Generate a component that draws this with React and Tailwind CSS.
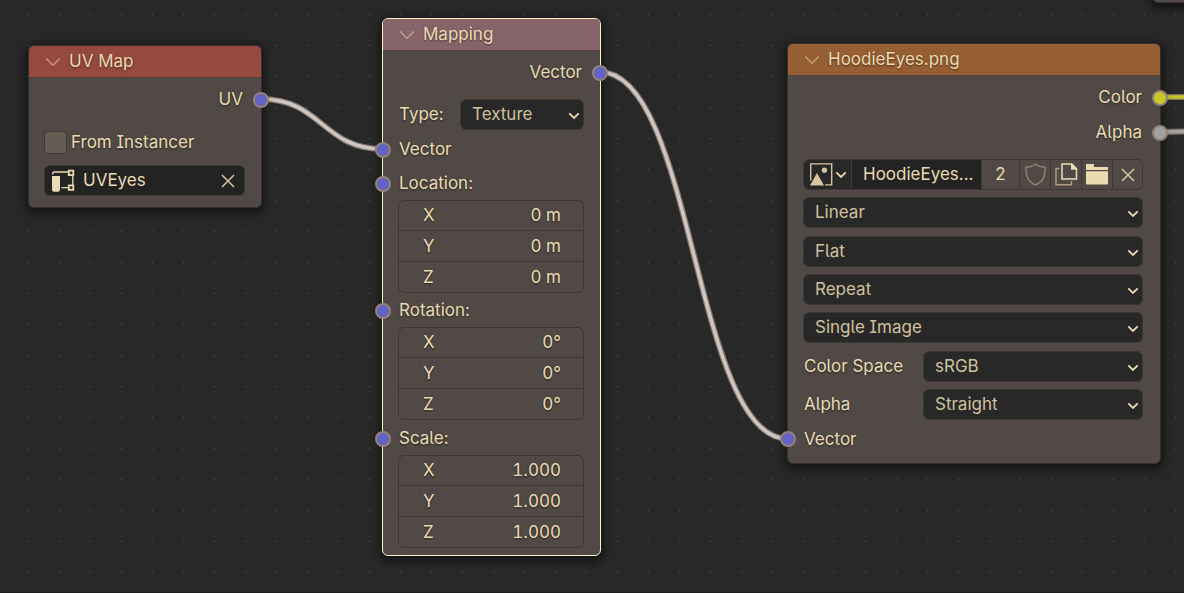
import React from "react";

const SOCKET_COLORS = {
  vector: "bg-[#6363c7]",
  color: "bg-[#c7c729]",
  value: "bg-[#a1a1a1]",
};

function Socket({ side, kind }) {
  return (
    <span
      className={`absolute top-1/2 size-4 -translate-y-1/2 rounded-full border-2 border-[#928374] ${
        side === "in" ? "-left-2" : "-right-2"
      } ${SOCKET_COLORS[kind]}`}
    />
  );
}

function Node({ title, header, active, place, children }) {
  return (
    <section
      className={`absolute rounded-md border bg-[#504945] pb-[7px] shadow-[0_3px_10px_2px_rgba(0,0,0,0.55)] ${
        active ? "border-[#fbf1c7]" : "border-[#35312f]"
      } ${place}`}
    >
      <header
        className={`flex h-8 items-center gap-2 rounded-t-[5px] border-b border-[#3c3836]/70 pl-4 ${header}`}
      >
        <button type="button" aria-label={`Collapse ${title}`}>
          <svg width="16" height="10" viewBox="0 0 16 10" fill="none" stroke="#ebdbb2" strokeOpacity="0.55" strokeWidth="1.5">
            <path d="M1.3 1.5 8 8.2l6.7-6.7" />
          </svg>
        </button>
        <h2>{title}</h2>
      </header>
      {children}
    </section>
  );
}

function Output({ label, kind }) {
  return (
    <div className="relative flex h-[35px] items-center justify-end pr-[18px]">
      {label}
      <Socket side="out" kind={kind} />
    </div>
  );
}

function Input({ label, className }) {
  return (
    <div className={`relative flex items-center pl-4 ${className}`}>
      {label}
      <Socket side="in" kind="vector" />
    </div>
  );
}

function SmallChevron() {
  return (
    <svg width="12" height="8" viewBox="0 0 12 8" fill="none" stroke="#ebdbb2" strokeWidth="1.8">
      <path d="M1.3 1.3 6 6l4.7-4.7" />
    </svg>
  );
}

function Cross() {
  return (
    <svg width="14" height="14" viewBox="0 0 14 14" fill="none" stroke="#d5c6a0" strokeWidth="1.5">
      <path d="M1 1l12 12M13 1 1 13" />
    </svg>
  );
}

function Dropdown({ id, label, value, className }) {
  return (
    <div className={`grid items-center ${className}`}>
      <select
        id={id}
        aria-label={label}
        defaultValue={value}
        className="col-start-1 row-start-1 h-[31px] w-full appearance-none rounded-md border border-[#3c3836] bg-[#282828] pl-[11px] pr-6 text-[#d0c19c]"
      >
        <option>{value}</option>
      </select>
      <span className="pointer-events-none col-start-1 row-start-1 mr-1 mt-0.5 justify-self-end">
        <SmallChevron />
      </span>
    </div>
  );
}

function VectorFields({ name, value }) {
  return (
    <div className="ml-[15px] mr-4 divide-y divide-[#3c3836] rounded-md border border-[#3c3836]">
      {["X", "Y", "Z"].map((axis, i) => (
        <label
          key={axis}
          className={`flex items-center pl-6 pr-[22px] ${i === 1 ? "h-[31px]" : "h-[30px]"}`}
        >
          {axis}
          <input
            aria-label={`${name} ${axis}`}
            defaultValue={value}
            className="w-0 grow bg-transparent text-right tabular-nums [text-shadow:inherit]"
          />
        </label>
      ))}
    </div>
  );
}

function UVIcon() {
  return (
    <svg width="23" height="23" viewBox="0 0 23 23" fill="none" stroke="#ebdbb2" strokeWidth="1.3">
      <path d="M.7 5.5V4.5Q.7 3 2.4 3H16M9.5 18.7H16M20.8 7v9" />
      <path d="M0 7h8v13.5Q8 22.7 6 22.7H2Q0 22.7 0 20.5z" fill="#ebdbb2" stroke="none" />
      <path d="M16.8 1.7h4.5v4.5h-4.5zM16.8 16.4h4.5v4.5h-4.5z" fill="#282828" strokeWidth="1.8" />
    </svg>
  );
}

function ImageIcon() {
  return (
    <svg width="23" height="23" viewBox="0 0 23 23" fill="none" stroke="#d5c6a0" strokeWidth="1.4">
      <path d="M.7 17.5V.9h21v21h-6.5" />
      <path d="M0 22.6 7 10l7 12.6z" fill="#d5c6a0" stroke="none" />
      <circle cx="14.4" cy="7.2" r="2.6" fill="#d5c6a0" stroke="none" />
    </svg>
  );
}

function ShieldIcon() {
  return (
    <svg width="21" height="23" viewBox="0 0 21 23" fill="none" stroke="#8f8672" strokeWidth="1.4">
      <path d="M10.5 1Q7 4.2 1 4.2C.6 13 2.6 18.5 10.5 22 18.4 18.5 20.4 13 20 4.2 14 4.2 10.5 1 10.5 1z" />
    </svg>
  );
}

function CopyIcon() {
  return (
    <svg width="23" height="23" viewBox="0 0 23 23" fill="none">
      <path d="M4.5 5.5H1v16.3h15.5V18" stroke="#ebdbb2" strokeOpacity="0.6" strokeWidth="1.4" />
      <path d="M7 1h9.5l5 5v10H7z" stroke="#ebdbb2" strokeWidth="1.5" />
      <path d="M16 .3h1L22.3 5.5V6.7H16z" fill="#ebdbb2" />
    </svg>
  );
}

function FolderIcon() {
  return (
    <svg width="22" height="21" viewBox="0 0 22 21" fill="#ebdbb2">
      <path d="M0 0h8v3h14v3H0zM0 7.3h22V19.5q0 1-1 1H1q-1 0-1-1z" />
    </svg>
  );
}

const WIRES = [
  { d: "M261 99C322 99 322 149 383 149", color: "#cfc6c2" },
  { d: "M600 72C694 72 694 439 788 439", color: "#cfc6c2" },
  { d: "M1160 97H1400", color: "#c7c729" },
  { d: "M1160 132L1400 128", color: "#a1a1a1" },
];

function Wires() {
  return (
    <svg className="pointer-events-none absolute inset-0 h-full w-full" fill="none">
      {WIRES.map((w) => (
        <g key={w.d}>
          <path d={w.d} stroke="#80746b" strokeWidth="6" />
          <path d={w.d} stroke={w.color} strokeWidth="3.5" />
        </g>
      ))}
    </svg>
  );
}

export default function App() {
  return (
    <main className="relative min-h-screen w-full overflow-hidden border-b border-[#1d1d1d] bg-[#282828] bg-[radial-gradient(circle,#343434_1px,transparent_1.5px)] bg-[length:31px_31px] bg-position-[13px_-1px] font-[Inter,sans-serif] text-[17px] leading-[23px] text-[#ebdbb2] [font-feature-settings:'cv08','ss04'] [text-shadow:0_1px_2px_rgba(0,0,0,0.5)]">
      <Wires />

      <Node title="UV Map" header="bg-[#95493f]" place="left-[28px] top-[45px] w-[234px]">
        <div className="mt-1">
          <Output label="UV" kind="vector" />
        </div>
        <label className="ml-[15px] mt-2.5 flex h-[31px] items-center gap-1">
          <input
            type="checkbox"
            className="size-[23px] appearance-none rounded-[4px] border border-[#3c3836] bg-[#665c54]"
          />
          From Instancer
        </label>
        <div className="mb-1 ml-[15px] mr-4 mt-[7px] flex h-[31px] items-center gap-2 rounded-md border border-[#3c3836] bg-[#232323] pl-[7px] pr-[9px]">
          <UVIcon />
          <input aria-label="UV map name" defaultValue="UVEyes" className="w-0 grow bg-transparent" />
          <button type="button" aria-label="Clear UV map">
            <Cross />
          </button>
        </div>
      </Node>

      <Node title="Mapping" active header="bg-[#87646a]" place="left-[382px] top-[18px] w-[219px]">
        <div className="mt-1">
          <Output label="Vector" kind="vector" />
        </div>
        <div className="mb-0.5 mr-4 mt-[9px] flex items-center justify-between pl-4">
          <label htmlFor="mapping-type">Type:</label>
          <Dropdown id="mapping-type" value="Texture" className="w-[124px]" />
        </div>
        <Input label="Vector" className="h-[35px]" />
        <Input label="Location:" className="h-[33px]" />
        <VectorFields name="Location" value="0 m" />
        <Input label="Rotation:" className="mt-px h-[33px]" />
        <VectorFields name="Rotation" value="0°" />
        <Input label="Scale:" className="mt-0.5 h-[33px]" />
        <VectorFields name="Scale" value="1.000" />
      </Node>

      <Node title="HoodieEyes.png" header="bg-[#965e33]" place="left-[787px] top-[43px] w-[374px]">
        <div className="mt-1">
          <Output label="Color" kind="color" />
          <Output label="Alpha" kind="value" />
        </div>
        <div className="mb-0.5 ml-[15px] mr-[17px] mt-[9px] flex flex-col gap-2">
          <div className="flex flex-col gap-[7px]">
            <div className="flex h-[31px] divide-x divide-[#3c3836] overflow-hidden rounded-md border border-[#3c3836]">
              <button type="button" aria-label="Browse images" className="flex w-12 items-center gap-0.5 bg-[#282828] pl-1.5">
                <ImageIcon />
                <SmallChevron />
              </button>
              <input aria-label="Image name" defaultValue="HoodieEyes..." className="w-0 grow bg-[#232323] pl-[11px]" />
              <button type="button" className="w-[38px]">2</button>
              <button type="button" aria-label="Fake user" className="grid w-[31px] place-items-center">
                <ShieldIcon />
              </button>
              <button type="button" aria-label="New image" className="grid w-[31px] place-items-center">
                <CopyIcon />
              </button>
              <button type="button" aria-label="Open image" className="grid w-[31px] place-items-center">
                <FolderIcon />
              </button>
              <button type="button" aria-label="Unlink image" className="grid w-[29px] place-items-center">
                <Cross />
              </button>
            </div>
            <Dropdown label="Interpolation" value="Linear" />
          </div>
          <div className="flex flex-col gap-[7px]">
            <Dropdown label="Projection" value="Flat" />
            <Dropdown label="Extension" value="Repeat" />
            <Dropdown label="Source" value="Single Image" />
          </div>
          <div className="flex flex-col gap-[7px]">
            <div className="flex items-center justify-between pl-px">
              <label htmlFor="color-space">Color Space</label>
              <Dropdown id="color-space" value="sRGB" className="w-[220px]" />
            </div>
            <div className="flex items-center justify-between pl-px">
              <label htmlFor="alpha-mode">Alpha</label>
              <Dropdown id="alpha-mode" value="Straight" className="w-[220px]" />
            </div>
          </div>
        </div>
        <Input label="Vector" className="h-[34px]" />
      </Node>

      <section className="absolute left-[1152px] top-[-60px] h-[63px] w-[300px] rounded-md border border-[#35312f] bg-[#504945] shadow-[0_3px_10px_2px_rgba(0,0,0,0.55)]" />
    </main>
  );
}
